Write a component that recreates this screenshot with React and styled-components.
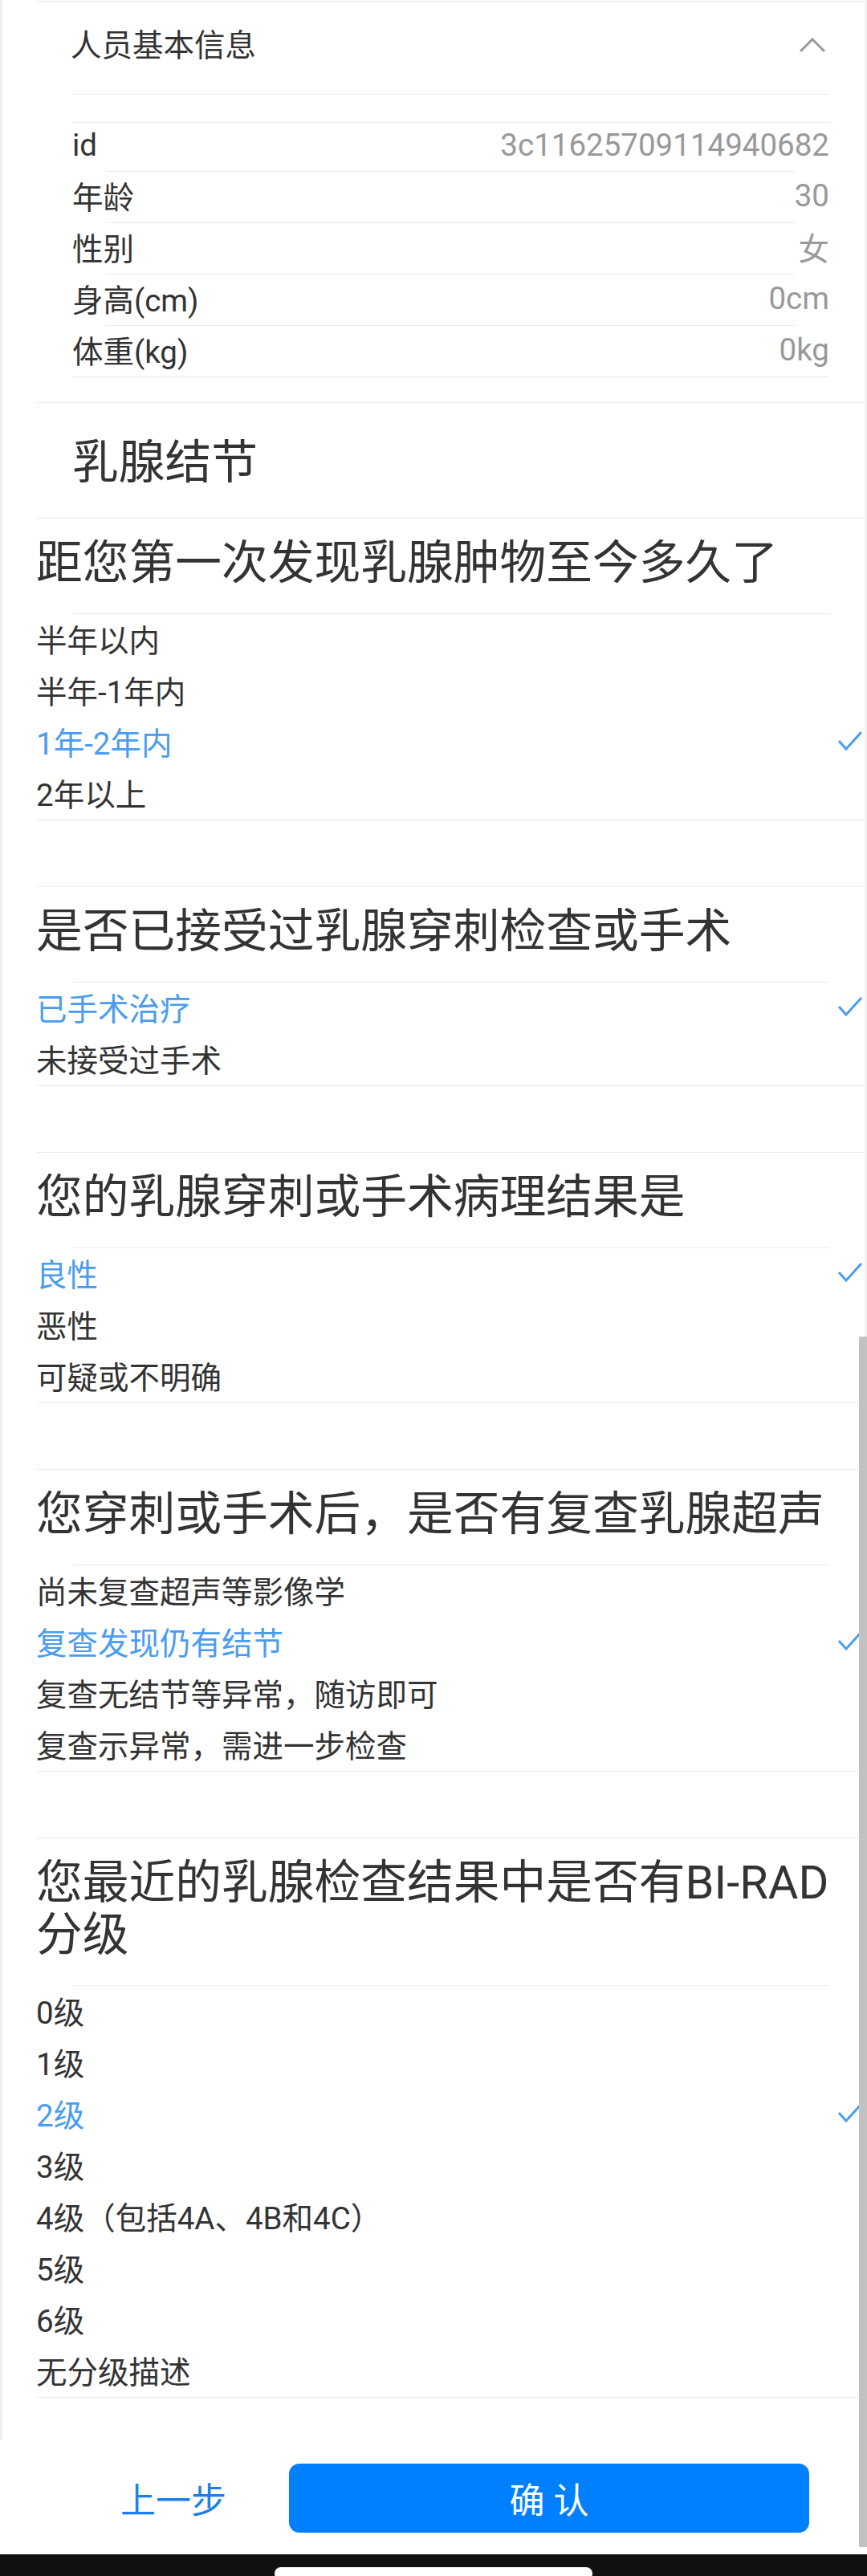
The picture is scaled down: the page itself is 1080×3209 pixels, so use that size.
import styled, { createGlobalStyle } from "styled-components"

const info = [
    { label: "id", value: "3c11625709114940682" },
    { label: "年龄", value: "30" },
    { label: "性别", value: "女" },
    { label: "身高(cm)", value: "0cm" },
    { label: "体重(kg)", value: "0kg" },
]

const questions = [
    { title: "距您第一次发现乳腺肿物至今多久了", options: ["半年以内", "半年-1年内", "1年-2年内", "2年以上"], selected: 2 },
    { title: "是否已接受过乳腺穿刺检查或手术", options: ["已手术治疗", "未接受过手术"], selected: 0 },
    { title: "您的乳腺穿刺或手术病理结果是", options: ["良性", "恶性", "可疑或不明确"], selected: 0 },
    { title: "您穿刺或手术后，是否有复查乳腺超声", options: ["尚未复查超声等影像学", "复查发现仍有结节", "复查无结节等异常，随访即可", "复查示异常，需进一步检查"], selected: 1 },
    { title: "您最近的乳腺检查结果中是否有BI-RAD分级", options: ["0级", "1级", "2级", "3级", "4级（包括4A、4B和4C）", "5级", "6级", "无分级描述"], selected: 2 },
]

const App = () => {
    return (
        <Screen>
            <GlobalStyle />
            <Scroll>
                <Panel>
                    <PanelHead>
                        <PanelTitle>人员基本信息</PanelTitle>
                        <svg width="34" height="20" viewBox="0 0 34 20">
                            <polyline points="2,17 17,2 32,17" fill="none" stroke="#999" strokeWidth="3" />
                        </svg>
                    </PanelHead>
                    <PanelBody>
                        <Spacer />
                        {info.map((item, index) => (
                            <div key={item.label}>
                                {index > 0 && <Divider />}
                                <InfoRow $first={index === 0}>
                                    <span>{item.label}</span>
                                    <Value>{item.value}</Value>
                                </InfoRow>
                            </div>
                        ))}
                    </PanelBody>
                </Panel>
                <SectionTitle>乳腺结节</SectionTitle>
                {questions.map((q) => (
                    <Question key={q.title}>
                        <QTitle>{q.title}</QTitle>
                        <OptDivider />
                        {q.options.map((opt, i) => (
                            <Option key={opt} $active={i === q.selected}>
                                <span>{opt}</span>
                                {i === q.selected && (
                                    <svg width="32" height="26" viewBox="0 0 32 26">
                                        <polyline points="2,13 11,23 30,2" fill="none" stroke="#4a9cf0" strokeWidth="3" />
                                    </svg>
                                )}
                            </Option>
                        ))}
                    </Question>
                ))}
            </Scroll>
            <Footer>
                <BackButton>上一步</BackButton>
                <ConfirmButton>确 认</ConfirmButton>
            </Footer>
            <NavBar>
                <Pill />
            </NavBar>
            <ScrollThumb />
        </Screen>
    )
}

export default App

const GlobalStyle = createGlobalStyle`
    html, body {
        margin: 0;
        padding: 0;
        background: #fff;
    }
    body {
        font-family: Roboto, "Noto Sans CJK SC", sans-serif;
        color: #333;
    }
    * {
        box-sizing: border-box;
    }
`
const Screen = styled.div`
    width: 1080px;
    position: relative;
    overflow: hidden;
`
const Scroll = styled.div`
    height: 3039px;
    padding-top: 1px;
    border-left: 3px solid #eeeeee;
    border-right: 3px solid #f2f2f2;
    overflow: hidden;
`
const Panel = styled.div`
    margin-left: 42px;
    border-top: 1px solid #ebebeb;
    border-bottom: 1px solid #ebebeb;
`
const PanelHead = styled.div`
    height: 115px;
    display: flex;
    align-items: center;
    justify-content: space-between;
    padding: 0 48px 5px 43px;
`
const PanelTitle = styled.div`
    font-size: 38.5px;
    line-height: 44px;
`
const PanelBody = styled.div`
    margin: 0 44px 31px 45px;
    border-top: 1px solid #ebebeb;
    border-bottom: 1px solid #ebebeb;
`
const Spacer = styled.div`
    height: 35px;
    border-bottom: 1px solid #ebebeb;
`
const Divider = styled.div`
    height: 1px;
    margin: 0 42px;
    background: #ebebeb;
`
const InfoRow = styled.div`
    height: ${(p) => (p.$first ? "60px" : "63px")};
    display: flex;
    align-items: center;
    justify-content: space-between;
    padding-bottom: 5px;
    font-size: 38.5px;
`
const Value = styled.span`
    color: #999;
`
const SectionTitle = styled.div`
    margin-left: 42px;
    padding: 44px 0 39px 45px;
    font-size: 57.75px;
    line-height: 60px;
`
const Question = styled.div`
    margin-left: 42px;
    border-top: 1px solid #ebebeb;
    border-bottom: 1px solid #ebebeb;
    & + & {
        margin-top: 82px;
    }
`
const QTitle = styled.div`
    padding: 23px 20px 30px 0;
    font-size: 57.75px;
    line-height: 65px;
`
const OptDivider = styled.div`
    height: 1px;
    margin: 0 44px 0 45px;
    background: #ebebeb;
`
const Option = styled.div`
    height: 64px;
    display: flex;
    align-items: center;
    justify-content: space-between;
    padding: 0 2px 4px 0;
    font-size: 38.5px;
    color: ${(p) => (p.$active ? "#4a9cf0" : "#333")};
`
const Footer = styled.div`
    height: 143px;
    display: flex;
    align-items: center;
    padding: 3px 72px 0;
    background: #fff;
`
const BackButton = styled.button`
    width: 288px;
    padding: 0;
    border: none;
    background: none;
    font-family: inherit;
    font-size: 44px;
    color: #1a7fe8;
`
const ConfirmButton = styled.button`
    width: 648px;
    height: 86px;
    border: none;
    border-radius: 13px;
    background: #0080ff;
    color: #fff;
    font-family: inherit;
    font-size: 44px;
`
const NavBar = styled.div`
    height: 27px;
    display: flex;
    justify-content: center;
    padding-top: 16px;
    background: #111;
    overflow: hidden;
`
const Pill = styled.div`
    width: 396px;
    height: 16px;
    border-radius: 8px;
    background: #fff;
`
const ScrollThumb = styled.div`
    position: absolute;
    right: 0;
    top: 1665px;
    width: 10px;
    height: 1508px;
    background: #c2c2c2;
`
